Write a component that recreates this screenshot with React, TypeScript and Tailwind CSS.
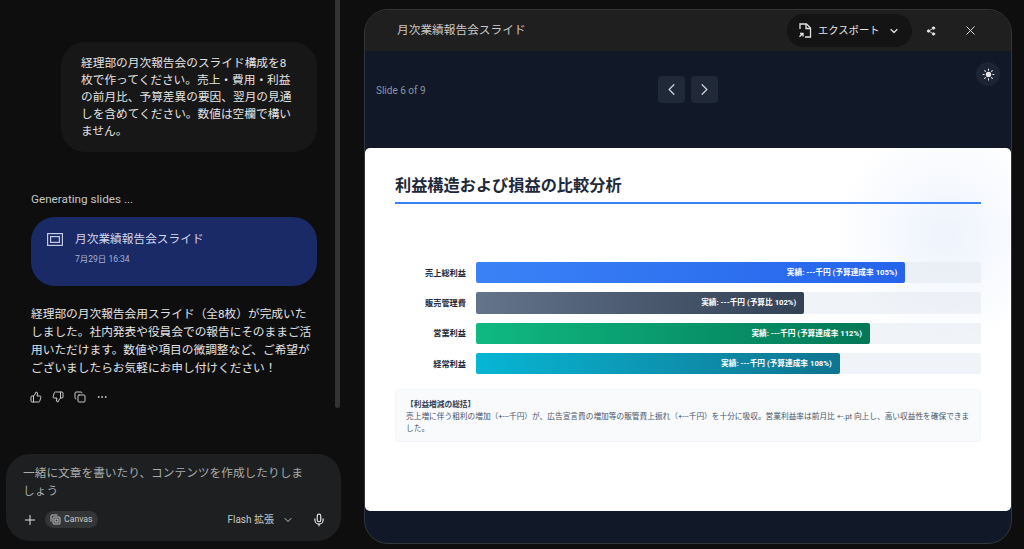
import { ChevronDown, ChevronLeft, ChevronRight, Copy, Mic, MoreHorizontal, Plus, Share2, Sun, ThumbsDown, ThumbsUp, X } from "lucide-react";

const jp = "font-['Roboto','Noto_Sans_CJK_JP',sans-serif]";

const bars = [
  { label: "売上総利益", value: "実績: ---千円 (予算達成率 105%)", width: "w-[85%]", color: "from-[#3b82f6] to-[#2563eb]" },
  { label: "販売管理費", value: "実績: ---千円 (予算比 102%)", width: "w-[65%]", color: "from-[#64748b] to-[#334155]" },
  { label: "営業利益", value: "実績: ---千円 (予算達成率 112%)", width: "w-[78%]", color: "from-[#10b981] to-[#047857]" },
  { label: "経常利益", value: "実績: ---千円 (予算達成率 108%)", width: "w-[72%]", color: "from-[#06b6d4] to-[#0e7490]" },
];

function SlidesIcon() {
  return (
    <svg width="16" height="13" viewBox="0 0 16 13" fill="none" stroke="#c4c9e0" strokeWidth="1.2">
      <rect x="0.6" y="0.6" width="14.8" height="11.8" />
      <rect x="3.6" y="3.6" width="8.8" height="5.8" />
    </svg>
  );
}

function ExportIcon() {
  return (
    <svg width="14" height="15" viewBox="0 0 14 15" fill="none" stroke="#e3e3e3" strokeWidth="1.3">
      <path d="M2 6V1h6.500L12.500 5v9H7" />
      <path d="M8 1v4.500h4.500" />
      <path d="M1.500 13.800l3-3M2 10.500h3v3" />
    </svg>
  );
}

function CanvasIcon() {
  return (
    <svg width="11" height="11" viewBox="0 0 11 11" fill="none" stroke="#c4c7c5" strokeWidth="1">
      <rect x="3" y="3" width="7" height="7" rx="1" />
      <rect x="5" y="5" width="3" height="3" />
      <path d="M1 7.500V2a1 1 0 0 1 1-1h5.500" />
    </svg>
  );
}

function ChatColumn() {
  return (
    <div className="relative flex h-full w-[364px] shrink-0 flex-col pl-[31px] pr-[47px]">
      <div className="mt-[42px] ml-[30px] rounded-[24px] bg-[#171717] pb-[12px] pl-[20px] pr-[24px] pt-[13px] text-[11.7px] leading-[17px] text-[#e3e3e3]">
        経理部の月次報告会のスライド構成を8枚で作ってください。売上・費用・利益の前月比、予算差異の要因、翌月の見通しを含めてください。数値は空欄で構いません。
      </div>
      <p className="mt-[39px] text-[11.7px] leading-[16px] text-[#c4c7c5]">Generating slides ...</p>
      <div className="mt-[10px] flex h-[69px] gap-[12px] rounded-[24px] bg-[#1a2a66] pl-[16px] pt-[14px]">
        <div className="pt-[2px]"><SlidesIcon /></div>
        <div>
          <p className="text-[11.7px] leading-[17px] text-[#d3d8ee]">月次業績報告会スライド</p>
          <p className="mt-[5px] text-[8.5px] leading-[12px] text-[#a9b1d3]">7月29日 16:34</p>
        </div>
      </div>
      <p className="mt-[19px] w-[281px] text-[11.7px] leading-[18px] text-[#e3e3e3]">
        経理部の月次報告会用スライド（全8枚）が完成いたしました。社内発表や役員会での報告にそのままご活用いただけます。数値や項目の微調整など、ご希望がございましたらお気軽にお申し付けください！
      </p>
      <div className="-ml-[1px] mt-[14px] flex items-center gap-[10px] text-[#c4c7c5]">
        <ThumbsUp size={12} />
        <ThumbsDown size={12} />
        <Copy size={12} />
        <MoreHorizontal size={12} />
      </div>
      <div className="absolute bottom-[8px] left-[6px] w-[335px] rounded-[24px] bg-[#1e1f20] pb-[13px] pl-[17px] pr-[33px] pt-[10px]">
        <p className="text-[11.7px] leading-[18px] text-[#a8abaa]">一緒に文章を書いたり、コンテンツを作成したりしましょう</p>
        <div className="-ml-[1px] -mr-[18px] mt-[11px] flex items-center">
          <Plus size={16} strokeWidth={1.5} className="text-[#e3e3e3]" />
          <div className="ml-[7px] flex h-[17px] items-center gap-[3px] rounded-full bg-[#333537] px-[5px] text-[8.7px] text-[#c4c7c5]">
            <CanvasIcon />
            Canvas
          </div>
          <span className="ml-auto text-[10px] text-[#c4c7c5]">Flash 拡張</span>
          <ChevronDown size={12} className="ml-[8px] text-[#c4c7c5]" />
          <Mic size={14} className="ml-[18px] text-[#e3e3e3]" />
        </div>
      </div>
      <div className="absolute right-[24px] top-0 h-[408px] w-[5px] rounded-b-full bg-[#333333]" />
    </div>
  );
}

function SlidePanel() {
  return (
    <div className="mb-[5px] mr-[12px] mt-[9px] flex flex-1 flex-col overflow-hidden rounded-[24px] border border-[#333538] bg-[#111827]">
      <div className="flex h-[41px] shrink-0 items-center bg-[#1f1f1f] pl-[32px] pr-[33px]">
        <h1 className="text-[11.7px] text-[#c9c9c9]">月次業績報告会スライド</h1>
        <div className="ml-auto flex h-[33px] w-[125px] items-center rounded-full bg-[#141414] pl-[11px] text-[#e3e3e3]">
          <ExportIcon />
          <span className="ml-[6px] text-[10.3px]">エクスポート</span>
          <ChevronDown size={12} strokeWidth={2.4} className="ml-[9px]" />
        </div>
        <Share2 size={10} className="ml-[14px] text-[#e3e3e3]" fill="#e3e3e3" />
        <X size={15} strokeWidth={1.5} className="ml-[27px] text-[#e3e3e3]" />
      </div>
      <div className="relative flex h-[97px] shrink-0 pt-[25px]">
        <span className="absolute left-[11px] top-[32px] text-[10px] text-[#8c95a3]">Slide 6 of 9</span>
        <div className="mx-auto flex gap-[6px]">
          <div className="flex h-[27px] w-[27px] items-center justify-center rounded-[4px] bg-[#1f2937] text-[#d1d5db]"><ChevronLeft size={19} strokeWidth={1.5} /></div>
          <div className="flex h-[27px] w-[27px] items-center justify-center rounded-[4px] bg-[#1f2937] text-[#d1d5db]"><ChevronRight size={19} strokeWidth={1.5} /></div>
        </div>
        <div className="absolute right-[11px] top-[11px] flex h-[24px] w-[24px] items-center justify-center rounded-full bg-[#1b2533] text-[#e5e7eb]"><Sun size={13} fill="#e5e7eb" /></div>
      </div>
      <div className="relative h-[363px] shrink-0 overflow-hidden rounded-[5px] bg-white px-[30px] pt-[26px]">
        <div className="absolute right-[-44px] top-[-23px] h-[220px] w-[220px] rounded-full bg-[radial-gradient(closest-side,#eef3fc,#ffffff00)]" />
        <div className="relative">
          <h2 className="border-b-2 border-[#3b82f6] pb-[4px] text-[16.2px] font-bold leading-[24px] text-[#1e293b]">利益構造および損益の比較分析</h2>
          <div className="mt-[58px] flex flex-col gap-[9.1px]">
            {bars.map((b) => (
              <div key={b.label} className="flex items-center">
                <span className="w-[71px] text-right text-[8.2px] font-bold text-[#1e293b]">{b.label}</span>
                <div className="ml-[10px] h-[21.3px] flex-1 rounded-[2px] bg-[#e2e8f0]/50">
                  <div className={`flex h-full items-center justify-end rounded-[2px] bg-gradient-to-r pr-[8px] text-[7.7px] font-bold text-white ${b.width} ${b.color}`}>
                    {b.value}
                  </div>
                </div>
              </div>
            ))}
          </div>
          <div className="mt-[15px] h-[53px] rounded-[4px] border border-[#f1f5f9] bg-[#f8fafc] px-[10px] pt-[9px] text-[7.7px] leading-[12px] text-[#475569]">
            <p className="font-bold text-[#334155]">【利益増減の総括】</p>
            <p>売上増に伴う粗利の増加（+---千円）が、広告宣言費の増加等の販管費上振れ（+---千円）を十分に吸収。営業利益率は前月比 +-.pt 向上し、高い収益性を確保できました。</p>
          </div>
        </div>
      </div>
      <div className="flex-1" />
    </div>
  );
}

export default function App() {
  return (
    <div className={`flex h-[549px] w-[1024px] overflow-hidden bg-[#0e0e0f] ${jp}`}>
      <ChatColumn />
      <SlidePanel />
    </div>
  );
}
